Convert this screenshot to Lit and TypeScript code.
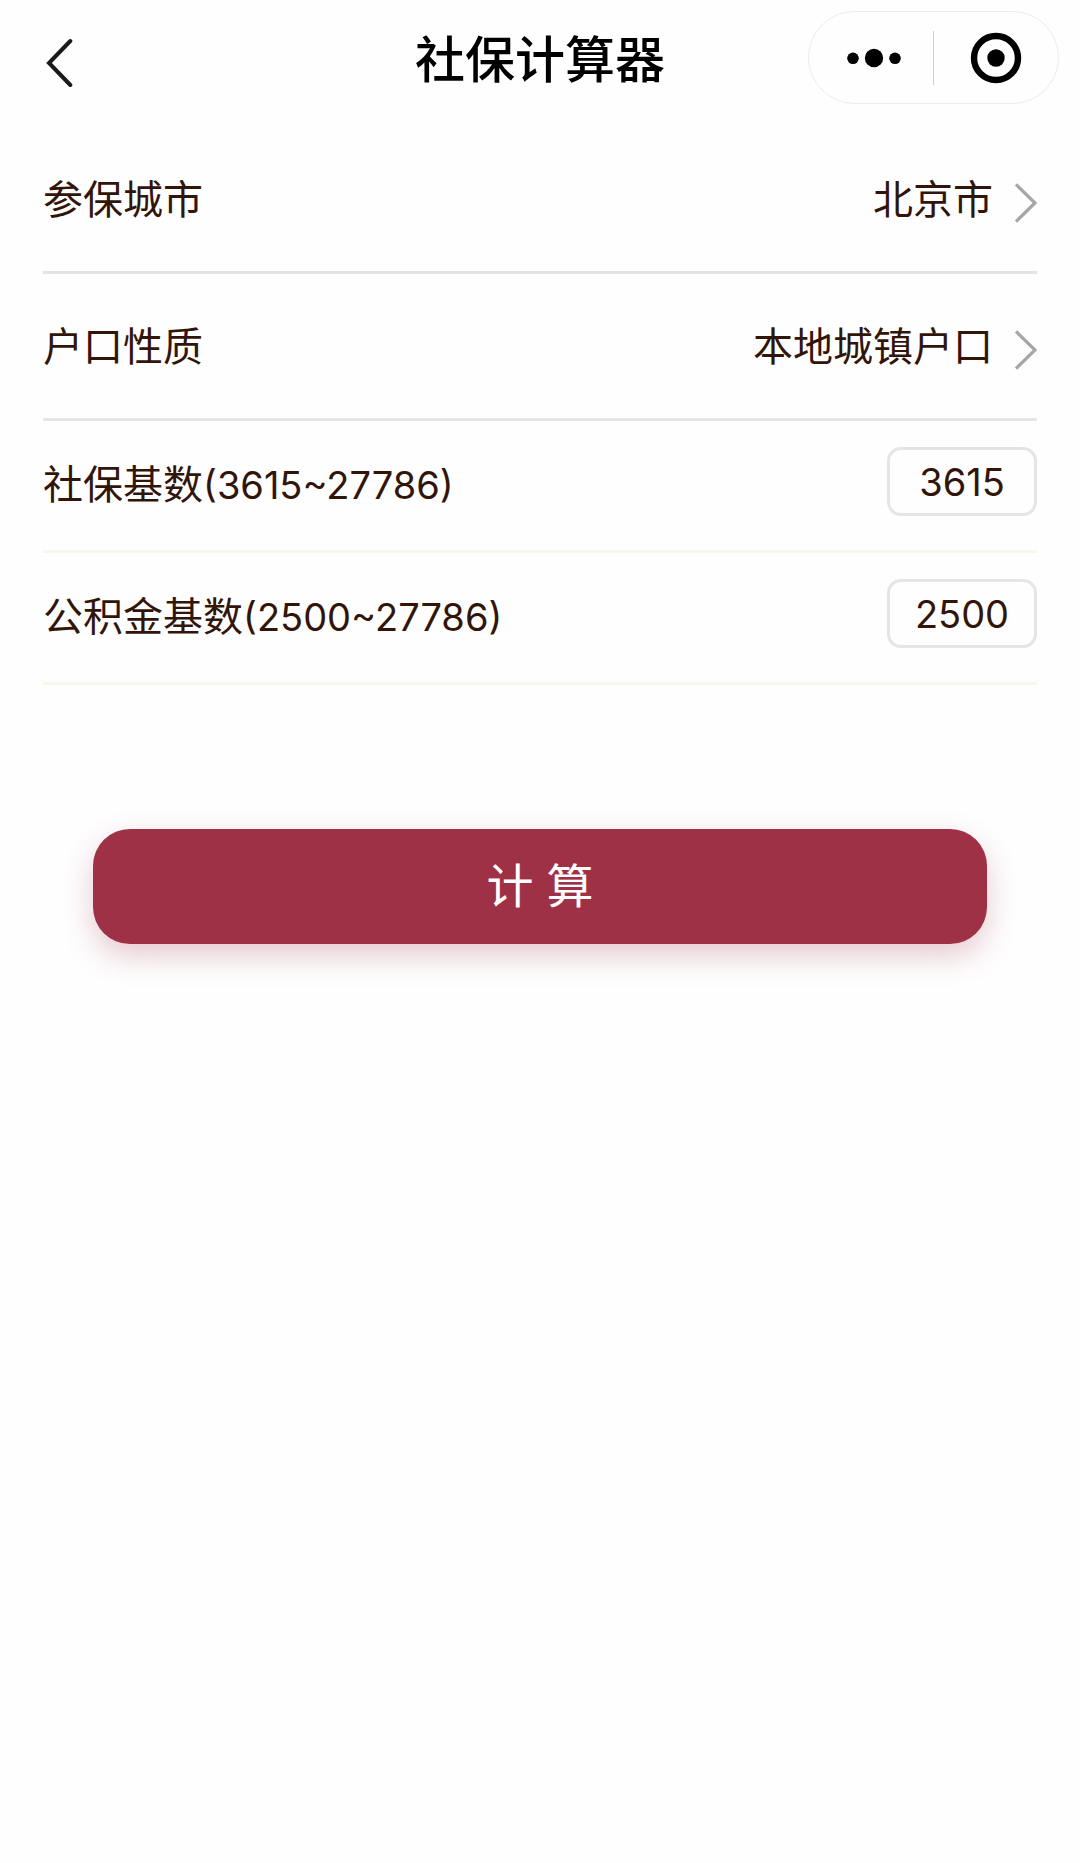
import { LitElement, html, css } from "lit";
import { customElement, property, state } from "lit/decorators.js";

@customElement("picker-row")
class PickerRow extends LitElement {
  @property() label = "";
  @property({ attribute: false }) options: string[] = [];

  static styles = css`
    :host {
      display: block;
    }
    .row {
      display: flex;
      align-items: center;
      box-sizing: border-box;
      height: 147px;
      padding-top: 2px;
      border-bottom: 3px solid #e5e5e5;
    }
    .label {
      flex: 1;
    }
    .value {
      appearance: none;
      flex: none;
      margin: 0;
      padding: 0;
      border: 0;
      background: none;
      font: inherit;
      color: inherit;
      text-align-last: right;
      cursor: pointer;
    }
    .arrow {
      flex: none;
      display: block;
      margin: 6px 0 0 22px;
    }
  `;

  render() {
    return html`
      <div class="row">
        <label class="label" for="value">${this.label}</label>
        <select class="value" id="value">
          ${this.options.map((option) => html`<option>${option}</option>`)}
        </select>
        <svg class="arrow" width="22" height="40" viewBox="0 0 22 40" fill="none" stroke="#a6a6a6" stroke-width="3.2" aria-hidden="true">
          <path d="M1 1.4 20 20 1 38.6" />
        </svg>
      </div>
    `;
  }
}

@customElement("amount-row")
class AmountRow extends LitElement {
  @property() label = "";
  @property({ type: Number }) min = 0;
  @property({ type: Number }) max = 0;
  @state() private amount = "";

  static styles = css`
    :host {
      display: block;
    }
    .row {
      display: flex;
      align-items: flex-start;
      padding: 26px 0 34px;
      border-bottom: 3px solid #f9f6ec;
    }
    .label {
      flex: 1;
      padding-top: 8px;
      line-height: 60px;
    }
    .range {
      font-size: 38px;
    }
    .amount {
      box-sizing: border-box;
      width: 150px;
      height: 69px;
      margin: 0;
      padding: 0;
      border: 3px solid #e5e5e5;
      border-radius: 14px;
      outline: none;
      background: none;
      font: inherit;
      font-size: 38px;
      color: inherit;
      text-align: center;
    }
  `;

  render() {
    return html`
      <div class="row">
        <label class="label" for="amount">${this.label}<span class="range">(${this.min}~${this.max})</span></label>
        <input
          class="amount"
          id="amount"
          inputmode="numeric"
          .value=${this.amount || String(this.min)}
          @input=${(e: Event) => (this.amount = (e.target as HTMLInputElement).value)}
        />
      </div>
    `;
  }
}

@customElement("app-root")
class AppRoot extends LitElement {
  static styles = css`
    :host {
      display: block;
      min-height: 100vh;
      background: #fefefe;
      color: #321509;
      font-family: Inter, "Noto Sans CJK SC", sans-serif;
      font-size: 40px;
      line-height: 60px;
    }
    button {
      margin: 0;
      padding: 0;
      border: 0;
      background: none;
      font: inherit;
      color: inherit;
      cursor: pointer;
    }
    svg {
      display: block;
    }
    .header {
      display: grid;
      grid-template-columns: 1fr auto 1fr;
      align-items: center;
      padding: 11px 21px;
    }
    .back {
      justify-self: start;
      padding: 10px 24px 0;
    }
    .title {
      margin: 0;
      padding-top: 4px;
      font-size: 50px;
      font-weight: 500;
      color: #000;
    }
    .capsule {
      justify-self: end;
      display: flex;
      align-items: center;
      box-sizing: border-box;
      width: 251px;
      height: 93px;
      border: 1px solid #ececec;
      border-radius: 47px;
    }
    .capsule-button {
      flex: 1;
      display: grid;
      place-items: center;
    }
    .divider {
      width: 1px;
      height: 54px;
      background: #cfcfcf;
    }
    .form {
      padding: 12px 43px;
    }
    .submit {
      display: block;
      width: calc(100% - 100px);
      height: 115px;
      margin: 144px auto 0;
      padding-bottom: 2px;
      border-radius: 37px;
      background: #9f3146;
      box-shadow: 0 12px 30px rgba(159, 49, 70, 0.25);
      font-size: 47px;
      color: #fff;
    }
  `;

  render() {
    return html`
      <header class="header">
        <button class="back" aria-label="返回">
          <svg width="28" height="50" viewBox="0 0 28 50" fill="none" stroke="#1a1a1a" stroke-width="4" stroke-linecap="round">
            <path d="M25.3 3 4 25 25.3 47" />
          </svg>
        </button>
        <h1 class="title">社保计算器</h1>
        <div class="capsule">
          <button class="capsule-button" aria-label="更多">
            <svg width="62" height="20" viewBox="0 0 62 20">
              <circle cx="13" cy="10.3" r="5.8" />
              <circle cx="34" cy="10" r="9.2" />
              <circle cx="55" cy="10.3" r="5.8" />
            </svg>
          </button>
          <span class="divider"></span>
          <button class="capsule-button" aria-label="关闭">
            <svg width="52" height="52" viewBox="0 0 52 52">
              <circle cx="26" cy="26" r="22" fill="none" stroke="#000" stroke-width="6.4" />
              <circle cx="26" cy="26" r="8.7" />
            </svg>
          </button>
        </div>
      </header>
      <main class="form">
        <picker-row label="参保城市" .options=${["北京市"]}></picker-row>
        <picker-row label="户口性质" .options=${["本地城镇户口"]}></picker-row>
        <amount-row label="社保基数" min="3615" max="27786"></amount-row>
        <amount-row label="公积金基数" min="2500" max="27786"></amount-row>
        <button class="submit">计 算</button>
      </main>
    `;
  }
}
